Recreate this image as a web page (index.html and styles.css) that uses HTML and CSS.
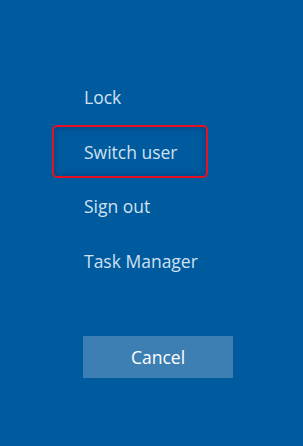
FILE: index.html
```html
<!DOCTYPE html>
<html lang="en">
<head>
    <meta charset="UTF-8">
    <title>Security options</title>
    <link rel="stylesheet" href="styles.css">
</head>
<body>
    <div class="screen">
      <ul class="options">
        <li class="option">Lock</li>
        <li class="option focused">Switch user</li>
        <li class="option">Sign out</li>
        <li class="option">Task Manager</li>
      </ul>
      <button type="button" class="cancel">Cancel</button>
    </div>
</body>
</html>
```
FILE: styles.css
```css
body {
    margin: 0;
    background: #005a9e;
    font-family: "Open Sans", "Noto Sans", sans-serif;
}
.screen { padding: 70px 0 0 52px; height: 446px; box-sizing: border-box; }
.options { list-style: none; margin: 0; padding: 0; width: 156px; }
.option {
    height: 53px;
    margin-bottom: 2px;
    box-sizing: border-box;
    border: 2px solid transparent;
    border-radius: 5px;
    padding-left: 30px;
    display: flex;
    align-items: center;
    color: #cfe1f1;
    font-size: 17.5px;
}
.option.focused {
    margin-top: 1px;
    margin-bottom: 1px;
    border-color: #e81123;
    box-shadow: inset 0 0 6px rgba(0, 40, 90, 0.5);
}
.cancel {
    display: block;
    margin: 49px 0 0 31px;
    width: 150px;
    height: 42px;
    border: none;
    background: #3d7eb3;
    color: #ffffff;
    font-family: "Open Sans", "Noto Sans", sans-serif;
    font-size: 17.5px;
}
```
